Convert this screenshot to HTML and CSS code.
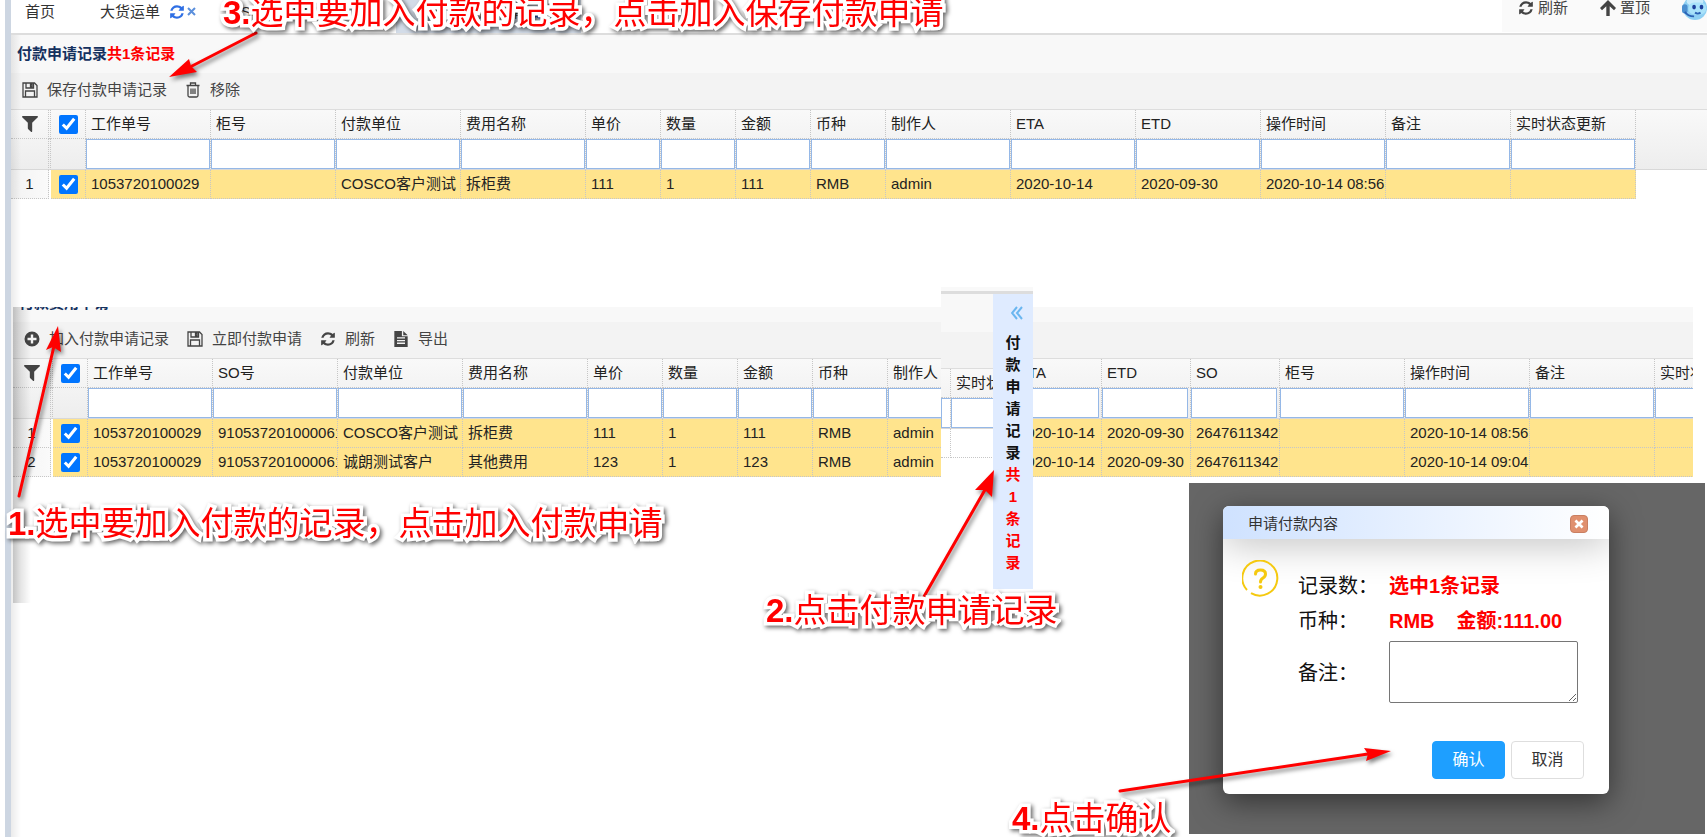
FILE: index.html
```
<!DOCTYPE html>
<html lang="zh-CN">

<head>
    <meta charset="UTF-8">
    <meta name="viewport" content="width=device-width, initial-scale=1.0">
    <title>付款申请记录</title>
    <link rel="stylesheet" href="styles.css">
</head>

<body>
    <!-- Shared icons -->
    <svg class="icon-defs" aria-hidden="true">
        <symbol id="i-refresh" viewBox="0 0 1536 1792">
            <path d="M1511 1056q0 5-1 7-64 268-268 434.500T764 1664q-146 0-282.500-55T238 1452l-129 129q-19 19-45 19t-45-19-19-45V1088q0-26 19-45t45-19h448q26 0 45 19t19 45-19 45l-137 137q71 66 161 102t187 36q134 0 250-65t186-179q11-17 53-117 8-23 30-23h192q13 0 22.500 9.500t9.500 22.500zm25-800v448q0 26-19 45t-45 19h-448q-26 0-45-19t-19-45 19-45l138-138Q969 384 768 384q-134 0-250 65T332 628q-11 17-53 117-8 23-30 23H50q-13 0-22.500-9.500T18 736v-7q65-268 270-434.500T768 128q146 0 284 55.500T1297 340l130-129q19-19 45-19t45 19 19 45z"/>
        </symbol>
        <symbol id="i-filter" viewBox="0 0 1408 1408">
            <path d="M1403 39q17 41-14 70L896 602v742q0 42-39 59-13 5-25 5-27 0-45-19l-256-256q-19-19-19-45V602L19 109Q-12 80 5 39 22 0 64 0h1280q42 0 59 39z"/>
        </symbol>
        <symbol id="i-save" viewBox="0 0 16 16">
            <path d="M1 1h11.500l2.500 2.500V15H1z M4 1v5h7.500V1 M3.500 15V9h9v6 M8.500 2.500h1.500v2H8.500z" fill="none" stroke="currentColor" stroke-width="1.300"/>
        </symbol>
        <symbol id="i-trash" viewBox="0 0 16 16">
            <path d="M1.500 3.500h13 M5.500 3.500V1h5v2.500 M3 3.500V13.500q0 1.500 1.500 1.500h7q1.500 0 1.500-1.500V3.500 M6 6.500v5.500 M8 6.500v5.500 M10 6.500v5.500" fill="none" stroke="currentColor" stroke-width="1.300"/>
        </symbol>
        <symbol id="i-plus" viewBox="0 0 16 16">
            <path fill-rule="evenodd" d="M8 .5a7.500 7.500 0 1 0 0 15a7.500 7.500 0 1 0 0-15z M6.800 3.500h2.400v3.300h3.300v2.400H9.200v3.300H6.800V9.200H3.500V6.800h3.300z"/>
        </symbol>
        <symbol id="i-file" viewBox="0 0 16 18">
            <path fill-rule="evenodd" d="M.5 0H9v6h6.500v12H.5z M3.500 7v1.500h9V7z M3.500 10v1.500h9V10z M3.500 13v1.500h9V13z"/>
            <path d="M10.500 0l5 4.700h-5z"/>
        </symbol>
        <symbol id="i-up" viewBox="0 0 16 16">
            <path d="M8 0l8 8-2 2.200-4.300-4V16H6.300V6.200L2 10.200 0 8z"/>
        </symbol>
    </svg>

    <div class="page">
        <header class="topbar">
            <nav class="tabs">
                <a class="tab" href="#">首页</a>
                <a class="tab" href="#">大货运单
                    <svg class="tab-refresh"><use href="#i-refresh"/></svg>
                    <svg class="tab-close" viewBox="0 0 9 9"><path d="M1 1l7 7M8 1L1 8"/></svg>
                </a>
                <a class="tab" href="#">SO操作中心</a>
                <a class="tab active" href="#">付款费用申请
                    <svg class="tab-refresh"><use href="#i-refresh"/></svg>
                </a>
            </nav>
            <div class="quick">
                <button class="quick-btn"><svg class="icon"><use href="#i-refresh"/></svg>刷新</button>
                <button class="quick-btn"><svg class="icon"><use href="#i-up"/></svg>置顶</button>
                <svg class="robot" viewBox="0 0 28 28">
                    <circle cx="14" cy="14" r="13" fill="#8fd0f3"/>
                    <ellipse cx="14" cy="7" rx="9" ry="5" fill="#c9ebfb"/>
                    <rect x="0" y="10" width="6" height="10" rx="3" fill="#4b8fd0"/>
                    <rect x="7" y="8" width="19" height="13" rx="6" fill="#a9e2fa"/>
                    <ellipse cx="13" cy="13" rx="2" ry="2.500" fill="#1d3f9c"/>
                    <ellipse cx="21" cy="13" rx="2" ry="2.500" fill="#1d3f9c"/>
                    <path d="M3 18q3 5 10 5M14 19q3 2 6 0" fill="none" stroke="#2b62b5" stroke-width="2"/>
                </svg>
            </div>
        </header>

        <section class="panel">
            <h2 class="panel-title">付款申请记录<span class="count">共1条记录</span></h2>
            <div class="toolbar">
                <button class="tool"><svg class="icon"><use href="#i-save"/></svg>保存付款申请记录</button>
                <button class="tool"><svg class="icon"><use href="#i-trash"/></svg>移除</button>
            </div>
            <table class="grid">
                <colgroup>
                    <col class="c-num"><col class="c-gap"><col class="c-check">
                    <col class="c-l"><col class="c-l"><col class="c-l"><col class="c-l">
                    <col class="c-s"><col class="c-s"><col class="c-s"><col class="c-s">
                    <col class="c-l"><col class="c-l"><col class="c-l"><col class="c-l"><col class="c-l"><col class="c-l">
                    <col>
                </colgroup>
                <thead>
                    <tr>
                        <th class="num"><svg class="icon"><use href="#i-filter"/></svg></th>
                        <th class="gap"></th>
                        <th class="check"><input type="checkbox" aria-label="全选" checked></th>
                        <th>工作单号</th><th>柜号</th><th>付款单位</th><th>费用名称</th>
                        <th>单价</th><th>数量</th><th>金额</th><th>币种</th>
                        <th>制作人</th><th>ETA</th><th>ETD</th><th>操作时间</th><th>备注</th><th>实时状态更新</th>
                        <th class="fill"></th>
                    </tr>
                    <tr class="filters">
                        <td></td><td></td><td></td>
                        <td><input type="text" aria-label="工作单号"></td>
                        <td><input type="text" aria-label="柜号"></td>
                        <td><input type="text" aria-label="付款单位"></td>
                        <td><input type="text" aria-label="费用名称"></td>
                        <td><input type="text" aria-label="单价"></td>
                        <td><input type="text" aria-label="数量"></td>
                        <td><input type="text" aria-label="金额"></td>
                        <td><input type="text" aria-label="币种"></td>
                        <td><input type="text" aria-label="制作人"></td>
                        <td><input type="text" aria-label="ETA"></td>
                        <td><input type="text" aria-label="ETD"></td>
                        <td><input type="text" aria-label="操作时间"></td>
                        <td><input type="text" aria-label="备注"></td>
                        <td><input type="text" aria-label="实时状态更新"></td>
                        <td class="fill"></td>
                    </tr>
                </thead>
                <tbody>
                    <tr class="selected">
                        <td class="num">1</td><td class="gap"></td>
                        <td class="check"><input type="checkbox" aria-label="选择第1行" checked></td>
                        <td>1053720100029</td><td></td><td>COSCO客户测试</td><td>拆柜费</td>
                        <td>111</td><td>1</td><td>111</td><td>RMB</td>
                        <td>admin</td><td>2020-10-14</td><td>2020-09-30</td><td>2020-10-14 08:56</td><td></td><td></td>
                        <td class="fill"></td>
                    </tr>
                </tbody>
            </table>
        </section>

        <section class="panel panel-fees">
            <h2 class="panel-title">付款费用申请</h2>
            <div class="toolbar">
                <button class="tool"><svg class="icon"><use href="#i-plus"/></svg>加入付款申请记录</button>
                <button class="tool"><svg class="icon"><use href="#i-save"/></svg>立即付款申请</button>
                <button class="tool"><svg class="icon"><use href="#i-refresh"/></svg>刷新</button>
                <button class="tool"><svg class="icon"><use href="#i-file"/></svg>导出</button>
            </div>
            <table class="grid">
                <colgroup>
                    <col class="c-num"><col class="c-gap"><col class="c-check">
                    <col class="c-l"><col class="c-l"><col class="c-l"><col class="c-l">
                    <col class="c-s"><col class="c-s"><col class="c-s"><col class="c-s">
                    <col class="c-l"><col class="c-m"><col class="c-m"><col class="c-m">
                    <col class="c-l"><col class="c-l"><col class="c-l"><col class="c-l">
                </colgroup>
                <thead>
                    <tr>
                        <th class="num"><svg class="icon"><use href="#i-filter"/></svg></th>
                        <th class="gap"></th>
                        <th class="check"><input type="checkbox" aria-label="全选" checked></th>
                        <th>工作单号</th><th>SO号</th><th>付款单位</th><th>费用名称</th>
                        <th>单价</th><th>数量</th><th>金额</th><th>币种</th>
                        <th>制作人</th><th>ETA</th><th>ETD</th><th>SO</th>
                        <th>柜号</th><th>操作时间</th><th>备注</th><th>实时状态更新</th>
                    </tr>
                    <tr class="filters">
                        <td></td><td></td><td></td>
                        <td><input type="text" aria-label="工作单号"></td>
                        <td><input type="text" aria-label="SO号"></td>
                        <td><input type="text" aria-label="付款单位"></td>
                        <td><input type="text" aria-label="费用名称"></td>
                        <td><input type="text" aria-label="单价"></td>
                        <td><input type="text" aria-label="数量"></td>
                        <td><input type="text" aria-label="金额"></td>
                        <td><input type="text" aria-label="币种"></td>
                        <td><input type="text" aria-label="制作人"></td>
                        <td class="short"><input type="text" aria-label="ETA"></td>
                        <td class="short"><input type="text" aria-label="ETD"></td>
                        <td class="short"><input type="text" aria-label="SO"></td>
                        <td><input type="text" aria-label="柜号"></td>
                        <td><input type="text" aria-label="操作时间"></td>
                        <td><input type="text" aria-label="备注"></td>
                        <td><input type="text" aria-label="实时状态更新"></td>
                    </tr>
                </thead>
                <tbody>
                    <tr class="selected">
                        <td class="num">1</td><td class="gap"></td>
                        <td class="check"><input type="checkbox" aria-label="选择第1行" checked></td>
                        <td>1053720100029</td><td>910537201000061</td><td>COSCO客户测试</td><td>拆柜费</td>
                        <td>111</td><td>1</td><td>111</td><td>RMB</td>
                        <td>admin</td><td>2020-10-14</td><td>2020-09-30</td><td>2647611342</td>
                        <td></td><td>2020-10-14 08:56</td><td></td><td></td>
                    </tr>
                    <tr class="selected">
                        <td class="num">2</td><td class="gap"></td>
                        <td class="check"><input type="checkbox" aria-label="选择第2行" checked></td>
                        <td>1053720100029</td><td>910537201000061</td><td>诚朗测试客户</td><td>其他费用</td>
                        <td>123</td><td>1</td><td>123</td><td>RMB</td>
                        <td>admin</td><td>2020-10-14</td><td>2020-09-30</td><td>2647611342</td>
                        <td></td><td>2020-10-14 09:04</td><td></td><td></td>
                    </tr>
                </tbody>
            </table>
        </section>
    </div>

    <!-- Collapsed records drawer -->
    <aside class="drawer">
        <div class="drawer-grid">
            <div class="panel-title"></div>
            <div class="toolbar"></div>
            <table class="grid">
                <colgroup><col class="c-edge"><col class="c-l"></colgroup>
                <thead>
                    <tr><th></th><th>实时状态更新</th></tr>
                    <tr class="filters">
                        <td><input type="text" aria-label="备注"></td>
                        <td><input type="text" aria-label="实时状态更新"></td>
                    </tr>
                </thead>
                <tbody>
                    <tr><td></td><td></td></tr>
                </tbody>
            </table>
        </div>
        <button class="drawer-handle">
            <svg class="chevrons" viewBox="0 0 12 14"><path d="M6 1L1 7l5 6M11 1L6 7l5 6"/></svg>
            <span class="drawer-label">付款申请记录<span class="count">共1条记录</span></span>
        </button>
    </aside>

    <!-- Confirm dialog -->
    <div class="backdrop">
        <div class="dialog" role="dialog" aria-labelledby="dialog-title">
            <div class="dialog-head">
                <span id="dialog-title">申请付款内容</span>
                <button class="dialog-close" aria-label="关闭">
                    <svg viewBox="0 0 18 18"><path d="M5 5l8 8M13 5l-8 8"/></svg>
                </button>
            </div>
            <div class="dialog-body">
                <svg class="ask" viewBox="0 0 37 37">
                    <path d="M5 30A17.500 17.500 0 1 1 9 33.200" fill="none" stroke="#f5c90f" stroke-width="2"/>
                    <path d="M13.500 14q0-4 5-4t5 4q0 2.500-2.500 4-2.500 1.500-2.500 4" fill="none" stroke="#f5c90f" stroke-width="3" stroke-linecap="round"/>
                    <circle cx="18.500" cy="27" r="2" fill="#f5c90f"/>
                </svg>
                <div class="form">
                    <span>记录数：</span>
                    <strong>选中1条记录</strong>
                    <span>币种：</span>
                    <strong>RMB<span class="amount">金额:111.00</span></strong>
                    <label for="remark">备注：</label>
                    <textarea id="remark"></textarea>
                </div>
            </div>
            <div class="dialog-foot">
                <button class="btn primary">确认</button>
                <button class="btn">取消</button>
            </div>
        </div>
    </div>

    <!-- Step notes pinned over the screens -->
    <svg class="arrows" width="1707" height="837" aria-hidden="true">
        <g stroke="#f00" stroke-width="3" stroke-linecap="round">
            <path d="M256 33L192 66"/>
            <path d="M19 496L54 346"/>
            <path d="M922 600L986 488"/>
            <path d="M1120 791L1368 754"/>
        </g>
        <g fill="#f00">
            <path d="M169 77L189 59 191 66 197 72z"/>
            <path d="M58 326L46 350 53 347 61 352z"/>
            <path d="M994 470L975 490 985 490 992 497z"/>
            <path d="M1391 751L1364 748 1368 754 1366 761z"/>
        </g>
    </svg>
    <p class="note note-1"><b>1.</b>选中要加入付款的记录，点击加入付款申请</p>
    <p class="note note-2"><b>2.</b>点击付款申请记录</p>
    <p class="note note-3"><b>3.</b>选中要加入付款的记录，点击加入保存付款申请</p>
    <p class="note note-4"><b>4.</b>点击确认</p>
</body>

</html>
```
FILE: styles.css
```
* {
    box-sizing: border-box;
}

body {
    position: relative;
    margin: 0;
    min-height: 100vh;
    overflow: hidden;
    background: #fff;
    color: #222;
    font-family: "Liberation Sans", "Noto Sans CJK SC", sans-serif;
    font-size: 15px;
    line-height: 20px;
}

button,
input,
textarea {
    font: inherit;
}

button {
    border: none;
    background: none;
    padding: 0;
    color: inherit;
    cursor: pointer;
}

.icon-defs {
    position: absolute;
    width: 0;
    height: 0;
}

.icon {
    width: 16px;
    height: 16px;
    fill: currentColor;
    flex: none;
}

.page {
    position: relative;
    min-height: 100vh;
    margin-left: 5px;
    border-left: 6px solid #cdd6e2;
}

.page::after {
    content: "";
    position: absolute;
    inset: 35px auto 0 0;
    width: 10px;
    background: linear-gradient(to right, rgba(0, 0, 0, .08), transparent);
    pointer-events: none;
}

/* Top bar */
.topbar {
    display: flex;
    justify-content: space-between;
    height: 35px;
    border-bottom: 2px solid #ddd;
    overflow: hidden;
}

.tabs {
    display: flex;
}

.tab {
    display: flex;
    align-items: center;
    height: 33px;
    padding: 0 14px 10px;
    margin-right: 17px;
    color: #333;
    text-decoration: none;
    white-space: nowrap;
}

.tab.active {
    min-width: 185px;
    margin-left: 42px;
    padding-left: 38px;
    background: #d3dce8;
}

.tab-refresh {
    width: 14px;
    height: 16px;
    margin-left: 10px;
    fill: #2f6fe4;
}

.tab-close {
    width: 9px;
    height: 9px;
    margin-left: 3px;
    fill: none;
    stroke: #5b8fdc;
    stroke-width: 2;
}

.quick {
    display: flex;
    align-items: flex-start;
    width: 205px;
    height: 32px;
    padding-left: 16px;
    background: #fafafa;
    color: #444;
    overflow: hidden;
}

.quick-btn {
    display: flex;
    align-items: center;
    gap: 4px;
    height: 16px;
    margin-right: 32px;
    white-space: nowrap;
}

.robot {
    width: 26px;
    height: 26px;
    margin-top: -5px;
    flex: none;
}

/* Panels */
.panel-title {
    height: 38px;
    margin: 0;
    padding: 9px 6px;
    background: #f8f8f8;
    color: #15315f;
    font-size: 15px;
    font-weight: bold;
    line-height: 20px;
}

.count {
    color: #f00;
}

.toolbar {
    display: flex;
    gap: 18px;
    height: 37px;
    padding: 0 11px 2px;
    border-bottom: 1px solid #ddd;
    background: #f3f3f3;
    color: #444;
}

.tool {
    display: flex;
    align-items: center;
    gap: 9px;
    white-space: nowrap;
}

.panel-fees {
    position: relative;
    height: 296px;
    margin: 108px 14px 0 2px;
    overflow: hidden;
}

.panel-fees::after {
    content: "";
    position: absolute;
    inset: 0 auto 0 0;
    width: 18px;
    background: linear-gradient(to right, rgba(0, 0, 0, .18), transparent);
    pointer-events: none;
}

.panel-fees .panel-title {
    margin-top: -23px;
}

/* Grid */
.grid {
    width: 100%;
    table-layout: fixed;
    border-collapse: separate;
    border-spacing: 0;
}

.c-num { width: 38px; }
.c-gap { width: 2px; }
.c-check { width: 35px; }
.c-s { width: 75px; }
.c-m { width: 89px; }
.c-l { width: 125px; }
.c-edge { width: 10px; }

.grid thead {
    background: linear-gradient(#f9f9f9, #ededed);
}

.grid th,
.grid td {
    height: 29px;
    padding: 0 0 0 5px;
    border-right: 1px dotted #c6c6c6;
    border-bottom: 1px dotted #c6c6c6;
    font-weight: normal;
    line-height: 20px;
    text-align: left;
    white-space: nowrap;
    overflow: hidden;
}

.grid .filters td {
    height: 31px;
    padding: 0;
    border-bottom: 1px solid #d8d8d8;
}

.filters input {
    display: block;
    width: 100%;
    height: 30px;
    padding: 0 4px;
    border: 1px solid #95b8e7;
    background: #fff;
}

.filters .short input {
    width: calc(100% - 2px);
}

.grid .num {
    padding: 0;
    text-align: center;
}

.num .icon {
    display: block;
    margin: 0 auto;
    fill: #444;
}

.grid .gap {
    padding: 0;
}

.grid .check {
    padding: 0;
    text-align: center;
}

.check input {
    display: block;
    width: 19px;
    height: 19px;
    margin: 0 auto;
    accent-color: #0075ff;
}

.grid .fill {
    border-right: none;
}

.grid thead th.fill {
    border-bottom: none;
}

.selected td {
    background: #ffe48d;
}

.grid .selected .num {
    background: linear-gradient(to right, #f3f3f3, #fafafa);
}

.grid .selected .gap,
.grid .selected .fill {
    border: none;
    background: #fff;
}

/* Drawer */
.drawer {
    position: absolute;
    top: 287px;
    left: 941px;
    display: flex;
    width: 92px;
    height: 302px;
    padding-top: 4px;
    background: #f9f9f9;
}

.drawer::before {
    content: "";
    position: absolute;
    inset: 4px 0 auto 0;
    height: 3px;
    background: #ddd;
}

.drawer-grid {
    flex: 1;
    min-width: 0;
    padding-top: 3px;
    background: #fff;
    overflow: hidden;
}

.drawer-handle {
    display: flex;
    flex-direction: column;
    align-items: center;
    width: 40px;
    margin-top: 3px;
    padding-top: 12px;
    background: #dfebff;
    color: #111;
    font-weight: bold;
}

.chevrons {
    width: 12px;
    height: 14px;
    margin-left: 8px;
    fill: none;
    stroke: #6ab6f0;
    stroke-width: 2;
}

.drawer-label {
    width: 15px;
    margin-top: 12px;
    line-height: 22px;
    text-align: center;
    word-break: break-all;
}

/* Dialog */
.backdrop {
    position: absolute;
    top: 483px;
    right: 2px;
    width: 516px;
    height: 351px;
    padding: 23px 0 0 34px;
    background: #666;
    overflow: hidden;
}

.dialog {
    width: 386px;
    border-radius: 6px;
    background: #fff;
    box-shadow: 0 8px 30px rgba(0, 0, 0, .5);
    overflow: hidden;
}

.dialog-head {
    display: flex;
    align-items: center;
    justify-content: space-between;
    height: 33px;
    padding: 2px 21px 0 25px;
    background: linear-gradient(to right, #cfe2ff, #fff);
    color: #333;
    box-shadow: 0 2px 40px rgba(0, 0, 0, .3);
}

.dialog-close svg {
    display: block;
    width: 18px;
    height: 18px;
    border: 1px solid #c97f62;
    border-radius: 4px;
    background: #e0906f;
    fill: none;
    stroke: #fff;
    stroke-width: 3;
}

.dialog-body {
    display: flex;
    gap: 19px;
    padding: 21px 31px 0 19px;
}

.ask {
    width: 37px;
    height: 37px;
    flex: none;
}

.form {
    display: grid;
    grid-template-columns: 91px 1fr;
    grid-template-rows: 35px 35px auto;
    align-items: center;
    flex: 1;
    padding-top: 8px;
    color: #111;
    font-size: 20px;
    line-height: 28px;
    white-space: nowrap;
}

.form strong {
    color: #f00;
}

.form .amount {
    margin-left: 22px;
}

.form label {
    padding-top: 4px;
}

.form textarea {
    display: block;
    width: 100%;
    height: 62px;
    margin-top: 3px;
    border: 1px solid #767676;
    border-radius: 2px;
    background: #fff;
    resize: both;
}

.dialog-foot {
    display: flex;
    justify-content: flex-end;
    gap: 6px;
    padding: 38px 25px 15px;
}

.btn {
    width: 73px;
    height: 38px;
    border: 1px solid #dedede;
    border-radius: 4px;
    background: #fff;
    color: #333;
    font-size: 16px;
}

.btn.primary {
    border-color: #1e9fff;
    background: #1e9fff;
    color: #fff;
}

/* Step notes */
.arrows {
    position: absolute;
    top: 0;
    left: 0;
    pointer-events: none;
    filter: drop-shadow(2px 3px 2px rgba(0, 0, 0, .5));
}

.note {
    position: absolute;
    margin: 0;
    color: #f00;
    font-size: 33px;
    line-height: 40px;
    white-space: nowrap;
    -webkit-text-stroke: 7px #fff;
    paint-order: stroke fill;
    stroke-linejoin: round;
    filter: drop-shadow(2px 2px 2px rgba(0, 0, 0, .6));
}

.note-1 {
    top: 504px;
    left: 8px;
}

.note-2 {
    top: 591px;
    left: 766px;
}

.note-3 {
    top: -7px;
    left: 223px;
}

.note-4 {
    top: 799px;
    left: 1012px;
}
```
